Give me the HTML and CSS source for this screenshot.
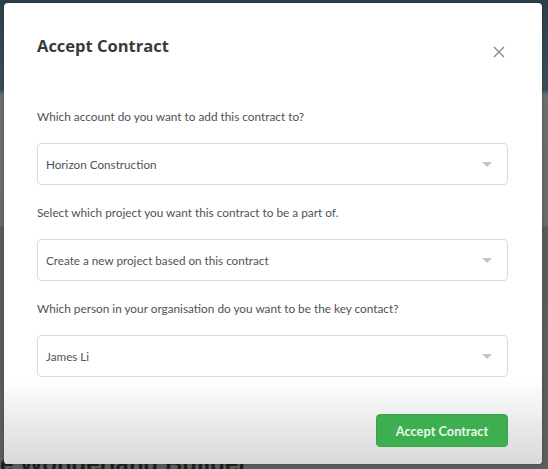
FILE: index.html
```html
<!DOCTYPE html>
<html>
<head>
<meta charset="utf-8">
<link rel="stylesheet" href="styles.css">
</head>
<body>
<div class="backdrop">
  <div class="bg-text">e Wonderland Builder</div>
  <div class="modal">
    <div class="modal-header">
      <h2 class="title">Accept Contract</h2>
      <button class="close" aria-label="Close">
        <svg width="12" height="12" viewBox="0 0 12 12"><path d="M1 1L11 11M11 1L1 11" stroke="#8a8a8a" stroke-width="1.4" fill="none"/></svg>
      </button>
    </div>
    <div class="modal-body">
      <div class="field">
        <label class="label">Which account do you want to add this contract to?</label>
        <div class="select"><span>Horizon Construction</span><i class="caret"></i></div>
      </div>
      <div class="field">
        <label class="label">Select which project you want this contract to be a part of.</label>
        <div class="select"><span>Create a new project based on this contract</span><i class="caret"></i></div>
      </div>
      <div class="field">
        <label class="label">Which person in your organisation do you want to be the key contact?</label>
        <div class="select"><span>James Li</span><i class="caret"></i></div>
      </div>
    </div>
    <div class="modal-footer">
      <button class="btn-accept">Accept Contract</button>
    </div>
  </div>
</div>
</body>
</html>
```

FILE: styles.css
```css
* { box-sizing: border-box; }
html, body { margin: 0; padding: 0; }
body {
  width: 548px;
  height: 469px;
  overflow: hidden;
  font-family: "Lato", "Open Sans", "Liberation Sans", sans-serif;
}
.backdrop {
  position: relative;
  width: 548px;
  height: 469px;
  overflow: hidden;
  background:
    linear-gradient(180deg, #2c3e4a 0px, #3a4f5a 90px, #6e6e6e 95px, #6a6a6a 225px, #5b5b5b 228px, #5d5d5d 469px);
  padding: 3px 6px 5px 4px;
}
.bg-text {
  position: absolute;
  left: 0;
  top: 452px;
  font: bold 24px/24px "Liberation Sans", sans-serif;
  color: #1e1e1e;
}
.modal {
  position: relative;
  width: 538px;
  height: 461px;
  background: #fff;
  border-radius: 4px;
  display: flex;
  flex-direction: column;
  box-shadow: 0 0 3px rgba(0,0,0,0.3);
}
.modal-header {
  display: flex;
  justify-content: space-between;
  align-items: flex-start;
  padding: 31px 33px 0 33px;
  height: 104px;
}
.title {
  margin: 0;
  font-family: "Open Sans", "Liberation Sans", sans-serif;
  font-size: 16.5px;
  font-weight: 700;
  line-height: 24px;
  color: #353a40;
}
.close {
  border: 0;
  background: none;
  padding: 0;
  margin: 12px 4px 0 0;
  width: 12px;
  height: 12px;
  display: flex;
}
.modal-body {
  display: flex;
  flex-direction: column;
  gap: 18px;
  padding: 0 34px 0 33px;
}
.field {
  display: flex;
  flex-direction: column;
  gap: 16px;
}
.label {
  font-size: 11.8px;
  line-height: 20px;
  color: #4e5358;
}
.select {
  height: 42px;
  border: 1px solid #dcdcdc;
  border-radius: 4px;
  display: flex;
  align-items: center;
  justify-content: space-between;
  padding: 0 15px 0 8px;
  font-size: 11.7px;
  color: #4e5358;
}
.caret {
  width: 0;
  height: 0;
  border-left: 5px solid transparent;
  border-right: 5px solid transparent;
  border-top: 5px solid #c4c4c4;
}
.modal-footer {
  flex: 1;
  display: flex;
  justify-content: flex-end;
  align-items: flex-start;
  padding: 35px 34px 0 0;
  margin-top: 2px;
  background: linear-gradient(180deg, #ffffff 0%, #ededed 45%, #d8d8d8 100%);
  border-radius: 0 0 4px 4px;
}
.btn-accept {
  width: 132px;
  height: 33px;
  border: 1px solid #37a64a;
  border-radius: 4px;
  background: #3daf50;
  color: #e9f6ea;
  font-family: "Lato", "Open Sans", sans-serif;
  font-size: 12.8px;
  font-weight: 700;
}
```
